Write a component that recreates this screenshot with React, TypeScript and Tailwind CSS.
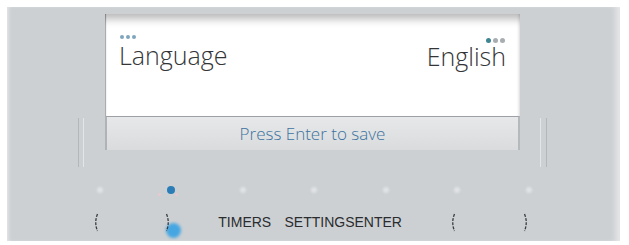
import React from "react";

const Paren = ({ dir }: { dir: "l" | "r" }) => (
  <svg width="6" height="19" viewBox="0 0 6 19" className="block">
    <path
      d={dir === "l" ? "M4.5 1 Q1 9.5 4.5 18" : "M1.5 1 Q5 9.5 1.5 18"}
      fill="none"
      stroke="#3a3d40"
      strokeWidth="1.3"
      strokeDasharray="3 1.2"
    />
  </svg>
);

const Dot = ({ active }: { active?: boolean }) =>
  active ? (
    <div className="relative w-[8px] h-[8px] rounded-full bg-[#2a7db6]">
      <div className="absolute left-[-9px] top-[7px] w-[3px] h-[3px] rounded-full bg-[#e8c9cd]" />
      <div className="absolute left-[8px] top-[7px] w-[3px] h-[3px] rounded-full bg-[#e8c9cd]" />
    </div>
  ) : (
    <div className="w-[6px] h-[6px] rounded-full bg-[#e0e3e5] blur-[1px]" />
  );

export default function App() {
  return (
    <div
      className="w-[629px] h-[245px] bg-white pt-[7px] pl-[7px] pr-[9px] overflow-hidden"
      style={{ fontFamily: '"Open Sans", sans-serif' }}
    >
      <div className="h-[234px] bg-[#cdd0d3] flex flex-col shadow-[inset_3px_0_4px_-2px_rgba(255,255,255,0.6),inset_-8px_0_6px_-4px_rgba(255,255,255,0.5)]">
        {/* display row */}
        <div className="flex pt-[7px]">
          <div className="ml-[71px] mt-[104px] h-[49px] w-[6px] border-l border-l-[#b4b7ba] border-r border-r-[#e3e5e7]" />
          <div className="ml-[21px] w-[415px] flex flex-col">
            <div className="h-[102px] bg-white flex justify-between px-[14px] pt-[20px] shadow-[inset_0_11px_9px_-6px_rgba(0,0,0,0.28),inset_2px_0_1px_-1px_rgba(0,0,0,0.35),inset_-3px_0_3px_-2px_rgba(0,0,0,0.15)]">
              <div className="flex flex-col">
                <div className="flex gap-[2px] ml-[1px] mt-[1px]">
                  <div className="w-[4px] h-[4px] rounded-full bg-[#7fa6bb]" />
                  <div className="w-[4px] h-[4px] rounded-full bg-[#7fa6bb]" />
                  <div className="w-[4px] h-[4px] rounded-full bg-[#7fa6bb]" />
                </div>
                <div className="text-[25px] leading-[30px] font-light text-[#333537] mt-[1px]">
                  Language
                </div>
              </div>
              <div className="flex flex-col items-end">
                <div className="flex gap-[2px] mr-[1px] mt-[4px]">
                  <div className="w-[5px] h-[5px] rounded-full bg-[#3f8592]" />
                  <div className="w-[5px] h-[5px] rounded-full bg-[#a7adb0]" />
                  <div className="w-[5px] h-[5px] rounded-full bg-[#a7adb0]" />
                </div>
                <div className="text-[25px] leading-[30px] font-light text-[#333537] -mt-[2px]">
                  English
                </div>
              </div>
            </div>
            <div className="h-[34px] bg-gradient-to-b from-[#e7e8e9] to-[#d9dbdc] border-t border-t-[#9da1a5] border-l-2 border-l-[#b0b3b6] border-r-2 border-r-[#b6b9bc] flex items-center justify-center">
              <span className="text-[17px] font-light text-[#3b72a0] leading-none -mt-[1px]">
                Press Enter to save
              </span>
            </div>
          </div>
          <div className="ml-[20px] mt-[104px] h-[49px] w-[7px] border-l border-l-[#e3e5e7] border-r border-r-[#b4b7ba]" />
        </div>

        {/* dots row */}
        <div className="mt-[17px] h-[12px] pl-[57px] grid grid-cols-[repeat(7,71.5px)] items-center">
          <div className="flex justify-center"><Dot /></div>
          <div className="flex justify-center"><Dot active /></div>
          <div className="flex justify-center"><Dot /></div>
          <div className="flex justify-center"><Dot /></div>
          <div className="flex justify-center"><Dot /></div>
          <div className="flex justify-center"><Dot /></div>
          <div className="flex justify-center"><Dot /></div>
        </div>

        {/* labels row */}
        <div
          className="mt-[16px] h-[20px] pl-[57px] grid grid-cols-[repeat(7,71.5px)] items-center text-[14px] text-[#2a2c2e]"
          style={{ fontFamily: '"Liberation Sans", Arial, sans-serif' }}
        >
          <div className="flex justify-center pr-[8px]"><Paren dir="l" /></div>
          <div className="relative flex justify-center pr-[6px]">
            <div className="absolute left-[30px] top-[10px] w-[15px] h-[15px] rounded-full bg-[#45a6e2] blur-[1.5px]" />
            <div className="relative"><Paren dir="r" /></div>
          </div>
          <div className="flex justify-center pl-[4px] whitespace-nowrap">TIMERS</div>
          <div className="col-span-2 pl-[6px] whitespace-nowrap">SETTINGSENTER</div>
          <div className="flex justify-center pr-[8px]"><Paren dir="l" /></div>
          <div className="flex justify-center pr-[6px]"><Paren dir="r" /></div>
        </div>
      </div>
    </div>
  );
}
